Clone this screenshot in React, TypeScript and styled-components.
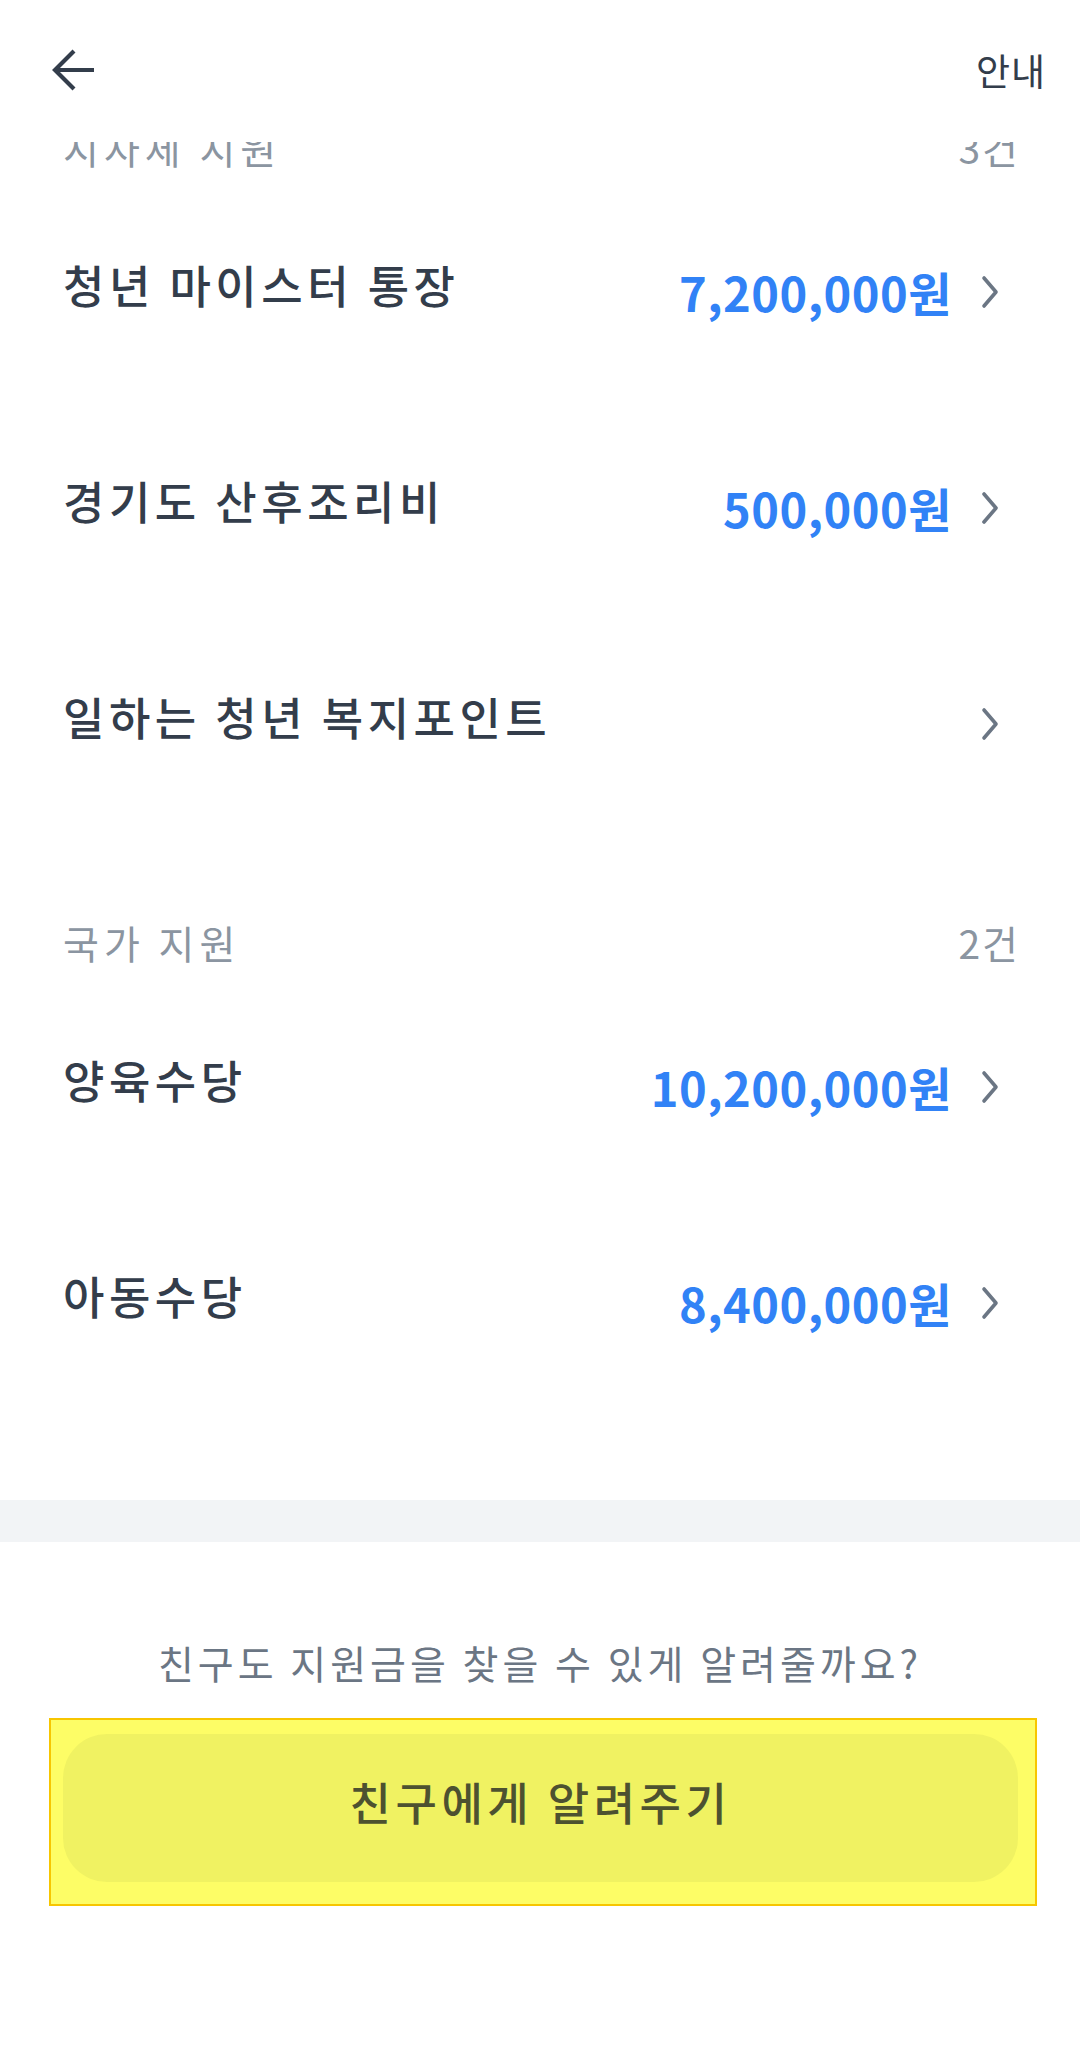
import React from "react";
import styled, { createGlobalStyle } from "styled-components";

const Global = createGlobalStyle`
  html, body { margin: 0; padding: 0; background: #ffffff; }
  body { font-family: "Noto Sans CJK KR", "Noto Sans", sans-serif; -webkit-font-smoothing: antialiased; }
  * { box-sizing: border-box; }
`;

const Page = styled.div`
  width: 1080px;
  height: 2068px;
  background: #ffffff;
  display: flex;
  flex-direction: column;
  overflow: hidden;
`;

const Header = styled.header`
  height: 142px;
  flex: 0 0 142px;
  display: flex;
  align-items: flex-start;
  justify-content: space-between;
  padding: 46px 34px 0 50px;
  background: #ffffff;
  position: relative;
  z-index: 2;
`;

const IconButton = styled.button`
  width: 48px;
  height: 48px;
  padding: 0;
  border: 0;
  background: transparent;
  display: flex;
  align-items: center;
  justify-content: center;
`;

const HeaderLink = styled.span`
  font-size: 37px;
  line-height: 48px;
  color: #333d4b;
  font-weight: 400;
  letter-spacing: 1px;
`;

const Viewport = styled.div`
  overflow: hidden;
  flex: 0 0 auto;
`;

const List = styled.div`
  margin-top: -105px;
  display: flex;
  flex-direction: column;
`;

const GroupHeader = styled.div`
  display: flex;
  justify-content: space-between;
  align-items: center;
  padding: 82px 62px 9px 63px;
  height: 147px;
  font-size: 39px;
  line-height: 56px;
  color: #8b95a1;
  letter-spacing: 5px;
`;

const Count = styled.span`
  letter-spacing: 2px;
  margin-right: -2px;
`;

const Row = styled.div`
  height: 216px;
  display: flex;
  align-items: center;
  padding: 0 80px 0 63px;
`;

const Title = styled.span`
  flex: 1;
  font-size: 45px;
  font-weight: 500;
  color: #333d4b;
  line-height: 56px;
  padding-bottom: 14px;
  letter-spacing: 4.5px;
`;

const Amount = styled.span`
  font-size: 47px;
  font-weight: 600;
  color: #3182f6;
  line-height: 56px;
  margin-right: 28px;
  letter-spacing: 0.5px;
`;

const Spacer = styled.div`
  height: 89px;
`;

const Band = styled.div`
  height: 42px;
  background: #f2f4f6;
`;

const Footer = styled.div`
  display: flex;
  flex-direction: column;
  align-items: stretch;
  padding-top: 92px;
`;

const Prompt = styled.p`
  margin: 0;
  text-align: center;
  font-size: 39px;
  line-height: 56px;
  color: #6b7684;
  letter-spacing: 4px;
`;

const Highlight = styled.div`
  margin: 28px 43px 0 49px;
  border: 2px solid #f7c600;
  background: #fdfd66;
  padding: 14px 17px 22px 12px;
`;

const ShareButton = styled.button`
  width: 100%;
  height: 148px;
  border: 0;
  border-radius: 44px;
  background: #f0f262;
  color: #4d5130;
  font-family: inherit;
  font-size: 45px;
  font-weight: 500;
  letter-spacing: 4.5px;
  padding: 0 0 14px 0;
  display: flex;
  align-items: center;
  justify-content: center;
`;

const BackArrow = () => (
  <svg width="48" height="48" viewBox="0 0 48 48" fill="none">
    <path d="M44 24H6M24 5L5 24L24 43" stroke="#333d4b" strokeWidth="4.2" strokeLinecap="butt" strokeLinejoin="miter" />
  </svg>
);

const Chevron = () => (
  <svg width="20" height="36" viewBox="0 0 20 36" fill="none">
    <path d="M4 4L16 18L4 32" stroke="#6b7684" strokeWidth="3.6" strokeLinecap="round" strokeLinejoin="round" />
  </svg>
);

type Item = { title: string; amount?: string };
type Group = { name: string; count: string; items: Item[] };

const groups: Group[] = [
  {
    name: "지자체 지원",
    count: "3건",
    items: [
      { title: "청년 마이스터 통장", amount: "7,200,000원" },
      { title: "경기도 산후조리비", amount: "500,000원" },
      { title: "일하는 청년 복지포인트" },
    ],
  },
  {
    name: "국가 지원",
    count: "2건",
    items: [
      { title: "양육수당", amount: "10,200,000원" },
      { title: "아동수당", amount: "8,400,000원" },
    ],
  },
];

export default function App() {
  return (
    <>
      <Global />
      <Page>
        <Header>
          <IconButton aria-label="뒤로">
            <BackArrow />
          </IconButton>
          <HeaderLink>안내</HeaderLink>
        </Header>
        <Viewport>
          <List>
            {groups.map((g) => (
              <React.Fragment key={g.name}>
                <GroupHeader>
                  <span>{g.name}</span>
                  <Count>{g.count}</Count>
                </GroupHeader>
                {g.items.map((it) => (
                  <Row key={it.title}>
                    <Title>{it.title}</Title>
                    {it.amount && <Amount>{it.amount}</Amount>}
                    <Chevron />
                  </Row>
                ))}
              </React.Fragment>
            ))}
            <Spacer />
          </List>
        </Viewport>
        <Band />
        <Footer>
          <Prompt>친구도 지원금을 찾을 수 있게 알려줄까요?</Prompt>
          <Highlight>
            <ShareButton>친구에게 알려주기</ShareButton>
          </Highlight>
        </Footer>
      </Page>
    </>
  );
}
